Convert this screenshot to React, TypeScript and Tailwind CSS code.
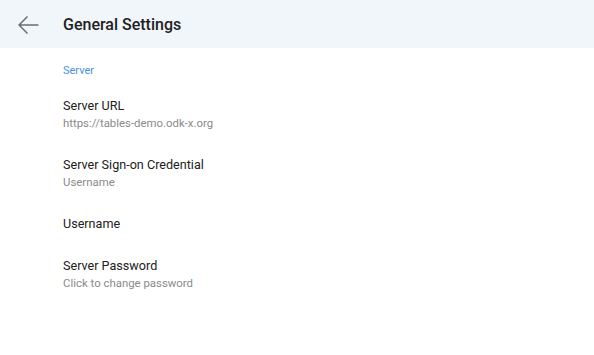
import React from "react";

const rows = [
  { title: "Server URL", sub: "https://tables-demo.odk-x.org" },
  { title: "Server Sign-on Credential", sub: "Username" },
  { title: "Username" },
  { title: "Server Password", sub: "Click to change password" },
];

export default function App() {
  return (
    <div className="w-[594px] h-[355px] bg-white overflow-hidden" style={{ fontFamily: "Roboto, 'Noto Sans', sans-serif" }}>
      <div className="h-[48px] bg-[#f1f6fb] flex items-center pl-[18px] pt-[1px]">
        <svg width="21" height="20" viewBox="0 0 21 20" fill="none" className="mr-[24px]">
          <path d="M20.5 10H1.5M9.5 1.5L1 10l8.5 8.5" stroke="#6b6f73" strokeWidth="1.5" />
        </svg>
        <div className="text-[16px] font-medium text-[#212121] leading-none">General Settings</div>
      </div>
      <div className="pl-[63px] pt-[1px]">
        <div className="pt-[15px] pb-[7px] text-[11px] leading-[14px] text-[#4a90e2]">Server</div>
        {rows.map((r) => (
          <div key={r.title} className="py-[12px]">
            <div className="text-[12.6px] leading-[18px] text-[#212121]">{r.title}</div>
            {r.sub && <div className="text-[11.4px] leading-[17px] text-[#8a8a8a]">{r.sub}</div>}
          </div>
        ))}
      </div>
    </div>
  );
}
